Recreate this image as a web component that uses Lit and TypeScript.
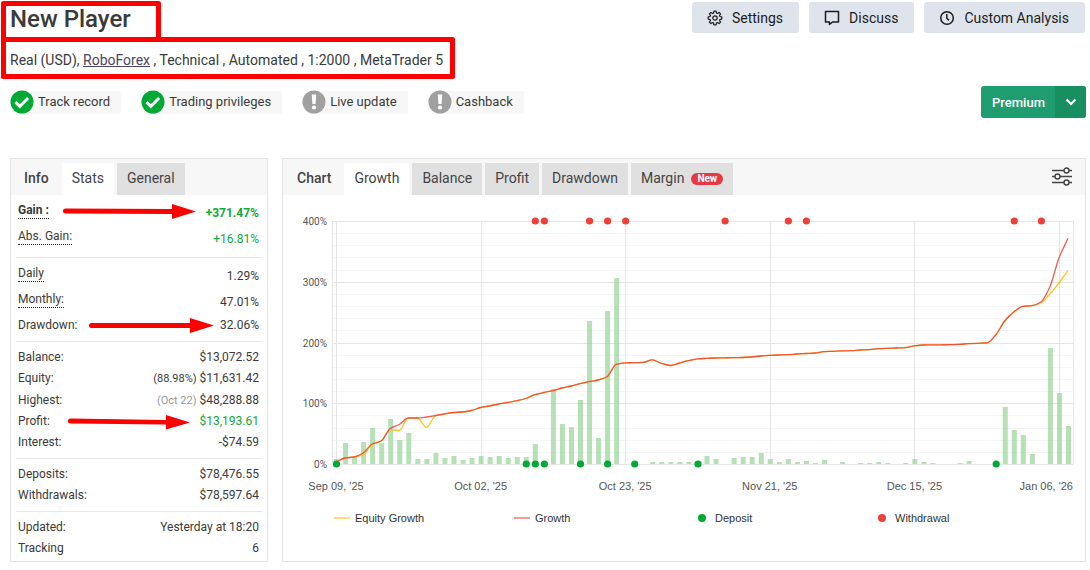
import { LitElement, html, css, svg, nothing } from "lit";
import { customElement, property, state } from "lit/decorators.js";
import { classMap } from "lit/directives/class-map.js";

const STEPS = 81;
const BARS = [
  5, 21, 7, 22, 36, 21, 45, 24, 31, 5, 5, 11, 6, 8, 4, 6, 8, 7, 8, 6, 7, 7, 20, 0, 75, 40, 37, 64, 143, 26, 153, 186,
  0, 0, 0, 2, 2, 2, 2, 2, 0, 8, 5, 0, 6, 7, 7, 11, 5, 2, 5, 2, 3, 1, 4, 0, 2, 0, 1, 1, 2, 1, 0, 1, 5, 2, 1, 0, 0, 1,
  3, 0, 0, 0, 57, 34, 29, 10, 0, 116, 71, 38,
];
/* Heights of both curves above the zero line, one per trading day. */
const GROWTH = [
  2, 6, 7, 11, 20, 23, 35.5, 39.5, 46, 46, 47, 48.5, 50, 51.5, 52, 53.5, 56.5, 58, 60, 61.5, 63.3, 65.5, 69.3, 71.5,
  73.3, 76, 78, 80.3, 82.3, 84, 87.3, 99.7, 101.2, 101.3, 101.7, 104.2, 100.7, 98.5, 101, 103.3, 105.2, 105.6, 106,
  106.2, 106.4, 106.5, 107, 108, 108.6, 109, 109.3, 110, 110.5, 111, 112.4, 112.7, 113.1, 113.3, 114, 114.4, 115.3,
  115.7, 116, 116.4, 118.2, 119, 119.1, 119.2, 119.3, 119.7, 120.3, 120.7, 121, 129, 143, 152, 157.7, 158.3, 162,
  177.3, 206, 225.7,
];
const EQUITY_CHANGES: Record<number, number> = { 3: 9, 4: 19.5, 6: 34.5, 7: 33.5, 10: 36.7, 11: 48, 78: 161, 79: 170, 80: 181, 81: 193.7 };
const EQUITY = GROWTH.map((v, i) => EQUITY_CHANGES[i] ?? v);
const DEPOSITS = [0, 21, 22, 23, 27, 30, 33, 40, 73];
const WITHDRAWALS = [22, 23, 28, 30, 32, 43, 50, 52, 75, 78];
const DATES: [number, string][] = [
  [0, "Sep 09, '25"], [16, "Oct 02, '25"], [32, "Oct 23, '25"], [48, "Nov 21, '25"], [64, "Dec 15, '25"], [80, "Jan 06, '26"],
];

const TOP = 26;
const ZERO = 269;
const LEFT = 49;

@customElement("growth-chart")
export class GrowthChart extends LitElement {
  static styles = css`
    :host { display: block; }
    .plot { display: block; width: 100%; height: 305px; overflow: visible; }
    .grid { stroke: #e6e6e6; shape-rendering: crispEdges; }
    .minor { stroke: #f5f5f5; shape-rendering: crispEdges; }
    .bar { fill: #8fd08f; fill-opacity: 0.65; }
    .line { fill: none; stroke-width: 1.3; stroke-linejoin: round; }
    .growth { stroke: #ee4036; stroke-opacity: 0.85; }
    .equity { stroke: #ffc61a; }
    .deposit { fill: #00a933; }
    .withdrawal { fill: #ef4038; }
    .tick { font: 10px "Roboto", "Liberation Sans", sans-serif; fill: #555; text-anchor: end; }
    .date { font: 11px "Liberation Sans", Arial, sans-serif; fill: #555; text-anchor: middle; }
    .date.last { text-anchor: end; }
  `;

  @state() private width = 802;
  private observer?: ResizeObserver;

  firstUpdated() {
    this.observer = new ResizeObserver(([entry]) => { this.width = entry.contentRect.width; });
    this.observer.observe(this);
  }

  disconnectedCallback() {
    super.disconnectedCallback();
    this.observer?.disconnect();
  }

  private get right() { return this.width - 12; }

  private x(i: number) { return LEFT + 4 + ((this.right - LEFT - 9) * i) / STEPS; }

  /* Smooth curve with level tangents at every local peak and dip. */
  private curve(values: number[]) {
    const h = this.x(1) - this.x(0);
    const d = values.slice(1).map((v, i) => v - values[i]);
    const m = values.map((_, i) => {
      const a = d[i - 1] ?? d[i];
      const b = d[i] ?? d[i - 1];
      return a * b <= 0 ? 0 : (2 * a * b) / (a + b);
    });
    return values.reduce((path, v, i) => {
      const y = ZERO - v;
      if (i === 0) return `M${this.x(0)} ${y}`;
      const x = this.x(i);
      return `${path}C${x - h + h / 3} ${ZERO - values[i - 1] - m[i - 1] / 3} ${x - h / 3} ${y + m[i] / 3} ${x} ${y}`;
    }, "");
  }

  render() {
    const span = (ZERO - TOP) / 20;
    const rows = Array.from({ length: 21 }, (_, i) => i);
    const snap = (v: number) => Math.round(v) + 0.5;
    return html`<svg class="plot" role="img" aria-label="Growth chart">
      ${rows.filter((i) => i % 5).map((i) => svg`<line class="minor" x1=${LEFT} x2=${this.right} y1=${snap(TOP + i * span)} y2=${snap(TOP + i * span)} />`)}
      ${rows.filter((i) => i % 5 === 0).map((i) => svg`<line class="grid" x1=${LEFT} x2=${this.right} y1=${snap(TOP + i * span)} y2=${snap(TOP + i * span)} />
        <text class="tick" x=${LEFT - 5} y=${Math.round(TOP + i * span) + 4}>${400 - i * 20}%</text>`)}
      ${[LEFT + 0.5, this.right + 0.5, ...DATES.map(([i]) => snap(this.x(i)))].map((x) => svg`<line class="grid" x1=${x} x2=${x} y1=${TOP} y2=${ZERO} />`)}
      ${BARS.map((v, i) => (v ? svg`<rect class="bar" x=${this.x(i) - 2} y=${ZERO - v} width="5" height=${v} />` : nothing))}
      <path class="line equity" d=${this.curve(EQUITY)} />
      <path class="line growth" d=${this.curve(GROWTH)} />
      ${WITHDRAWALS.map((i) => svg`<circle class="withdrawal" cx=${this.x(i) + 0.5} cy=${TOP} r="3.6" />`)}
      ${DEPOSITS.map((i) => svg`<circle class="deposit" cx=${this.x(i) + 0.5} cy=${ZERO} r="3.6" />`)}
      ${DATES.map(([i, label]) => svg`<text class=${i === 80 ? "date last" : "date"} x=${i === 80 ? this.right : this.x(i)} y="295">${label}</text>`)}
    </svg>`;
  }
}

@customElement("status-badge")
export class StatusBadge extends LitElement {
  static styles = css`
    :host { display: flex; align-items: center; gap: 4px; height: 23px; padding-right: 11px; background: #f7f7f7; border-radius: 12px 2px 2px 12px; font-size: 13px; line-height: 22px; color: #3a3a3a; }
    .icon { width: 24px; height: 24px; }
    .label { height: 23px; }
  `;
  @property({ type: Boolean }) ok = false;
  @property() label = "";

  render() {
    return html`<svg class="icon" viewBox="0 0 24 24" aria-hidden="true">
        <circle cx="12" cy="12" r="11.5" fill=${this.ok ? "#00a933" : "#a0a0a0"} />
        ${this.ok
          ? svg`<path d="M5.5 12.2l4.3 4.1 8.3-8.3" fill="none" stroke="#fff" stroke-width="3" />`
          : svg`<path d="M9.8 4.5h4.4l-.6 9.5h-3.2z" fill="#fff" /><circle cx="12" cy="17.5" r="2.1" fill="#fff" />`}
      </svg><span class="label">${this.label}</span>`;
  }
}

interface Row { label: string; value: string; note?: string; muted?: boolean; good?: boolean; strong?: boolean; hint?: boolean; tall?: boolean }

const GROUPS: Row[][] = [
  [
    { label: "Gain :", value: "+371.47%", good: true, strong: true, hint: true },
    { label: "Abs. Gain:", value: "+16.81%", good: true, hint: true },
  ],
  [
    { label: "Daily", value: "1.29%", hint: true },
    { label: "Monthly:", value: "47.01%", hint: true },
    { label: "Drawdown:", value: "32.06%" },
  ],
  [
    { label: "Balance:", value: "$13,072.52" },
    { label: "Equity:", value: "$11,631.42", note: "(88.98%)", tall: true },
    { label: "Highest:", value: "$48,288.88", note: "(Oct 22)", muted: true },
    { label: "Profit:", value: "$13,193.61", good: true },
    { label: "Interest:", value: "-$74.59" },
  ],
  [
    { label: "Deposits:", value: "$78,476.55" },
    { label: "Withdrawals:", value: "$78,597.64" },
  ],
  [
    { label: "Updated:", value: "Yesterday at 18:20" },
    { label: "Tracking", value: "6", tall: true },
  ],
];

@customElement("app-root")
export class AppRoot extends LitElement {
  static styles = css`
    :host { display: block; position: relative; background: #fff; color: #3a3a3a; font-family: "Roboto", "Liberation Sans", sans-serif; font-size: 14px; }
    * { box-sizing: border-box; }
    button { font: inherit; color: inherit; border: 0; margin: 0; padding: 0; cursor: pointer; white-space: nowrap; }
    .page { display: flex; flex-direction: column; padding: 2px 4px 8px 10px; }
    .top { display: flex; justify-content: space-between; align-items: flex-start; }
    .title { margin: 0; font-size: 24px; line-height: 34px; font-weight: 500; }
    .actions { display: flex; gap: 10px; padding-right: 1px; }
    .action { display: flex; align-items: center; gap: 9px; height: 31px; padding: 0 16px 0 15px; background: #dfe4ec; border-radius: 3px; color: #1c1c1c; }
    .action svg { width: 16px; height: 16px; fill: none; stroke: #1c1c1c; stroke-width: 1.2; }
    .about { margin: 14px 0 0; line-height: 20px; }
    .about a { color: #4a4560; }
    .middle { display: flex; justify-content: space-between; align-items: center; margin-top: 16px; }
    .badges { display: flex; gap: 20px; }
    .premium { display: flex; height: 32px; border-radius: 3px; overflow: hidden; background: #1f9d70; color: #fff; }
    .premium button { background: none; font-size: 13px; font-weight: 500; padding: 0 10px 0 11px; }
    .premium .more { display: grid; place-items: center; width: 31px; padding: 0; background: #178f61; }
    .more svg { width: 12px; height: 8px; }
    .panels { display: grid; grid-template-columns: 258px minmax(0, 1fr); gap: 14px; margin-top: 40px; }
    .panel { border: 1px solid #e5e5e5; }
    .head { display: flex; align-items: flex-end; gap: 3px; height: 36px; background: #f7f7f7; }
    .name { align-self: stretch; margin: 0; padding: 4px 10px 0 14px; line-height: 30px; font-size: 14px; font-weight: 500; color: #444; }
    .name.narrow { padding-left: 13px; }
    .tab { height: 32px; padding: 0 10px 2px; background: #e0e0e0; color: #444; }
    .tab.on { background: #fff; }
    .pill { display: inline-block; margin-left: 7px; padding: 0 6px; border-radius: 6px; background: #e63946; color: #fff; font-size: 10px; line-height: 12px; font-weight: 700; vertical-align: 1px; }
    .tune { margin: 0 12px 8px auto; background: none; width: 22px; height: 20px; }
    .tune svg { display: block; width: 22px; height: 20px; fill: #f7f7f7; stroke: #444; stroke-width: 1.4; }
    .group { margin: 0 5px; padding: 4px 3px 6px 2px; border-bottom: 1px solid #e8e8e8; font-size: 12px; }
    .group:last-child { border: 0; padding-bottom: 2px; }
    .row { display: flex; justify-content: space-between; align-items: center; height: 21px; }
    .row.tall { height: 22px; }
    .row.hinted { height: 26px; padding-top: 1px; }
    .hint { padding-bottom: 1px; border-bottom: 1px dotted #222; line-height: 14px; margin-bottom: 4px; }
    .good { color: #0fa83a; }
    .strong { font-weight: 700; }
    .note { font-size: 11px; }
    .muted { color: #999; }
    .legend { display: grid; grid-template-columns: 180px 184px 180px 1fr; padding: 8px 0 0 51px; margin: 0; list-style: none; font: 11px/20px "Liberation Sans", Arial, sans-serif; color: #333; }
    .legend li { display: flex; align-items: center; gap: 5px; }
    .stroke { width: 16px; height: 2px; background: #ffd877; }
    .stroke.red { background: #f69a95; }
    .dot { width: 8px; height: 8px; margin-right: 4px; border-radius: 50%; background: #00a933; }
    .dot.red { background: #ef4038; }
    .marks { position: absolute; left: 0; top: 0; width: 460px; height: 440px; pointer-events: none; fill: #f00; }
    .frame { fill: none; stroke: #f00; stroke-width: 5; stroke-linejoin: round; }
  `;

  @state() private statsTab = "Stats";
  @state() private chartTab = "Growth";

  private tab(name: string, active: string, pick: () => void) {
    return html`<button class=${classMap({ tab: true, on: name === active })} role="tab" aria-selected=${name === active} @click=${pick}>${name}${name === "Margin" ? html`<span class="pill">New</span>` : nothing}</button>`;
  }

  render() {
    return html`
      <div class="page">
        <header class="top">
          <h1 class="title">New Player</h1>
          <div class="actions">
            <button class="action"><svg viewBox="0 0 16 16" aria-hidden="true"><path d="M6.9 1.2h2.2l.4 1.9 1 .4 1.6-1.1 1.5 1.5-1.1 1.6.4 1 1.9.4v2.2l-1.9.4-.4 1 1.1 1.6-1.5 1.5-1.6-1.1-1 .4-.4 1.9H6.9l-.4-1.9-1-.4-1.6 1.1-1.5-1.5 1.1-1.6-.4-1-1.9-.4V6.9l1.9-.4.4-1-1.1-1.6 1.5-1.5 1.6 1.1 1-.4z" stroke-linejoin="round" /><circle cx="8" cy="8" r="2.2" /></svg>Settings</button>
            <button class="action"><svg viewBox="0 0 16 16" aria-hidden="true"><path d="M1.5 1.5h13v10.500H8.500L5.500 14.500V12H1.500z" stroke-width="1.500" stroke-linejoin="round" /></svg>Discuss</button>
            <button class="action"><svg viewBox="0 0 16 16" aria-hidden="true"><circle cx="8" cy="8" r="6.3" stroke-width="1.5" /><path d="M7.8 4v4.200l2.200 2.200" stroke-width="1.5" /></svg>Custom Analysis</button>
          </div>
        </header>
        <p class="about">Real (USD), <a href="#roboforex">RoboForex</a> , Technical , Automated , 1:2000 , MetaTrader 5</p>
        <div class="middle">
          <div class="badges">
            <status-badge ok label="Track record"></status-badge>
            <status-badge ok label="Trading privileges"></status-badge>
            <status-badge label="Live update"></status-badge>
            <status-badge label="Cashback"></status-badge>
          </div>
          <div class="premium">
            <button>Premium</button>
            <button class="more" aria-label="More plans"><svg viewBox="0 0 12 8" aria-hidden="true"><path d="M1.5 1.500l4.500 4.500 4.500-4.500" fill="none" stroke="#fff" stroke-width="2.2" /></svg></button>
          </div>
        </div>
        <main class="panels">
          <section class="panel">
            <div class="head" role="tablist">
              <h2 class="name narrow">Info</h2>
              ${["Stats", "General"].map((t) => this.tab(t, this.statsTab, () => (this.statsTab = t)))}
            </div>
            ${GROUPS.map((rows) => html`<div class="group">
              ${rows.map((r) => html`<div class=${classMap({ row: true, tall: !!r.tall, hinted: !!r.hint })}>
                <span class=${classMap({ hint: !!r.hint, strong: !!r.strong })}>${r.label}</span>
                <span>${r.note ? html`<span class=${classMap({ note: true, muted: !!r.muted })}>${r.note}</span> ` : nothing}<span class=${classMap({ good: !!r.good, strong: !!r.strong })}>${r.value}</span></span>
              </div>`)}
            </div>`)}
          </section>
          <section class="panel">
            <div class="head" role="tablist">
              <h2 class="name">Chart</h2>
              ${["Growth", "Balance", "Profit", "Drawdown", "Margin"].map((t) => this.tab(t, this.chartTab, () => (this.chartTab = t)))}
              <button class="tune" aria-label="Chart options"><svg viewBox="0 0 22 20" aria-hidden="true"><path d="M1 3.500h20M1 9.500h20M1 15.500h20" /><circle cx="15.500" cy="3.500" r="2.500" /><circle cx="6.500" cy="9.500" r="2.500" /><circle cx="15.500" cy="15.500" r="2.500" /></svg></button>
            </div>
            <growth-chart></growth-chart>
            <ul class="legend">
              <li><span class="stroke"></span>Equity Growth</li>
              <li><span class="stroke red"></span>Growth</li>
              <li><span class="dot"></span>Deposit</li>
              <li><span class="dot red"></span>Withdrawal</li>
            </ul>
          </section>
        </main>
      </div>
      <svg class="marks" viewBox="0 0 460 440" aria-hidden="true">
        <rect class="frame" x="3.5" y="3.5" width="155" height="36" />
        <rect class="frame" x="3.5" y="39.5" width="449" height="37" />
        <path d="M65.500 208.500L172 209v-5l24 7.500-24 7.500v-5L65.500 213.500a2.500 2.500 0 0 1 0-5z" />
        <path d="M91.500 323H190v-5l24 7.500-24 7.500v-5H91.500a2.500 2.500 0 0 1 0-5z" />
        <path d="M70.500 418.500L166 420v-5l24 7.500-24 7v-5L70.500 423.500a2.500 2.500 0 0 1 0-5z" />
      </svg>`;
  }
}
